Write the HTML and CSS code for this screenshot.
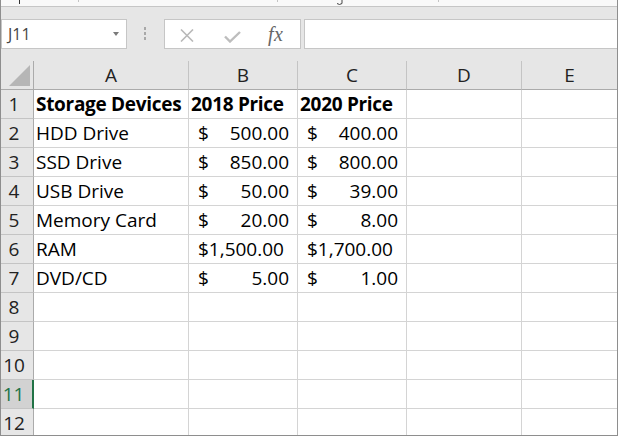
FILE: index.html
```html
<!DOCTYPE html>
<html>
<head>
<meta charset="utf-8">
<link rel="stylesheet" href="styles.css">
</head>
<body>
<div class="window">
  <div class="topstrip">
    <svg width="616" height="6" viewBox="0 0 616 6">
      <rect x="18" y="0" width="1" height="4" fill="#333"/>
      <rect x="77" y="0" width="1" height="2" fill="#c4c4c4"/>
      <rect x="276" y="0" width="1" height="2" fill="#c4c4c4"/>
      <rect x="437" y="0" width="1" height="2" fill="#c4c4c4"/>
      <path d="M336 3.5 Q338.5 5.5 341 3.5 L341 0" fill="none" stroke="#444" stroke-width="1"/>
    </svg>
  </div>
  <div class="toolbar">
    <div class="namebox"><span class="name">J11</span><span class="caret"></span></div>
    <div class="grip"><i></i><i></i><i></i></div>
    <div class="fxbox">
      <svg class="ico-x" width="14" height="13" viewBox="0 0 14 13"><path d="M1 0.5 L13 12.5 M13 0.5 L1 12.5" stroke="#b9b9b9" stroke-width="1.6" fill="none"/></svg>
      <svg class="ico-check" width="17" height="12" viewBox="0 0 17 12"><path d="M1 5.5 L6 10.5 L16 1" stroke="#bdbdbd" stroke-width="2.4" fill="none"/></svg>
      <span class="fx">fx</span>
    </div>
    <div class="formula"></div>
  </div>
  <div class="sheet">
    <div class="corner"><svg width="32" height="28" viewBox="0 0 32 28"><polygon points="29,4 29,25 8,25" fill="#b6b6b6"/></svg></div>
    <div class="ch">A</div><div class="ch">B</div><div class="ch">C</div><div class="ch">D</div><div class="ch last">E</div>

    <div class="rh">1</div><div class="c b">Storage Devices</div><div class="c b">2018 Price</div><div class="c b">2020 Price</div><div class="c"></div><div class="c last"></div>

    <div class="rh">2</div><div class="c">HDD Drive</div><div class="c m"><span>$</span><span>500.00</span></div><div class="c m"><span>$</span><span>400.00</span></div><div class="c"></div><div class="c last"></div>

    <div class="rh">3</div><div class="c">SSD Drive</div><div class="c m"><span>$</span><span>850.00</span></div><div class="c m"><span>$</span><span>800.00</span></div><div class="c"></div><div class="c last"></div>

    <div class="rh">4</div><div class="c">USB Drive</div><div class="c m"><span>$</span><span>50.00</span></div><div class="c m"><span>$</span><span>39.00</span></div><div class="c"></div><div class="c last"></div>

    <div class="rh">5</div><div class="c">Memory Card</div><div class="c m"><span>$</span><span>20.00</span></div><div class="c m"><span>$</span><span>8.00</span></div><div class="c"></div><div class="c last"></div>

    <div class="rh">6</div><div class="c">RAM</div><div class="c m"><span>$1,500.00</span></div><div class="c m"><span>$1,700.00</span></div><div class="c"></div><div class="c last"></div>

    <div class="rh">7</div><div class="c">DVD/CD</div><div class="c m"><span>$</span><span>5.00</span></div><div class="c m"><span>$</span><span>1.00</span></div><div class="c"></div><div class="c last"></div>

    <div class="rh">8</div><div class="c"></div><div class="c"></div><div class="c"></div><div class="c"></div><div class="c last"></div>
    <div class="rh">9</div><div class="c"></div><div class="c"></div><div class="c"></div><div class="c"></div><div class="c last"></div>
    <div class="rh">10</div><div class="c"></div><div class="c"></div><div class="c"></div><div class="c"></div><div class="c last"></div>
    <div class="rh sel">11</div><div class="c"></div><div class="c"></div><div class="c"></div><div class="c"></div><div class="c last"></div>
    <div class="rh">12</div><div class="c"></div><div class="c"></div><div class="c"></div><div class="c"></div><div class="c last"></div>
  </div>
</div>
</body>
</html>
```

FILE: styles.css
```css
html, body {
  margin: 0;
  padding: 0;
  background: #ffffff;
}
body {
  width: 619px;
  height: 436px;
  overflow: hidden;
  font-family: "Open Sans", "Noto Sans", sans-serif;
}
.window {
  width: 618px;
  height: 436px;
  box-sizing: border-box;
  border-left: 1px solid #8e8e8e;
  border-right: 1px solid #8e8e8e;
  border-bottom: 1px solid #8e8e8e;
  overflow: hidden;
  background: #ffffff;
}
.topstrip {
  height: 6px;
  background: #f9f9f9;
  border-bottom: 1px solid #c6c6c6;
}
.topstrip svg {
  display: block;
}
.toolbar {
  height: 54px;
  box-sizing: border-box;
  padding-top: 12px;
  background: #e6e6e6;
  display: flex;
  align-items: flex-start;
}
.namebox {
  width: 126px;
  height: 30px;
  box-sizing: border-box;
  border: 1px solid #c6c6c6;
  background: #ffffff;
  display: flex;
  align-items: center;
  justify-content: space-between;
  padding: 0 7px 0 6px;
}
.name {
  font-size: 16px;
  line-height: 28px;
  color: #444444;
}
.caret {
  width: 0;
  height: 0;
  border-left: 3.5px solid transparent;
  border-right: 3.5px solid transparent;
  border-top: 4px solid #7a7a7a;
}
.grip {
  width: 37px;
  box-sizing: border-box;
  padding-left: 17px;
  margin-top: 8px;
  display: flex;
  flex-direction: column;
  gap: 2px;
}
.grip i {
  display: block;
  width: 2px;
  height: 3px;
  background: #a8a8a8;
}
.fxbox {
  width: 137px;
  height: 30px;
  box-sizing: border-box;
  border: 1px solid #c6c6c6;
  background: #ffffff;
  display: flex;
  align-items: center;
  padding-left: 15px;
}
.ico-x {
  display: block;
  margin-right: 30px;
  margin-top: 2px;
}
.ico-check {
  display: block;
  margin-right: 27px;
  margin-top: 5px;
}
.fx {
  font-family: "Liberation Serif", serif;
  font-style: italic;
  font-size: 20px;
  letter-spacing: 0.5px;
  color: #666666;
  line-height: 28px;
}
.formula {
  flex: 1;
  height: 30px;
  box-sizing: border-box;
  margin-left: 3px;
  border: 1px solid #c6c6c6;
  border-right: none;
  background: #ffffff;
}
.sheet {
  display: grid;
  grid-template-columns: 33px 155px 109px 109px 115px 95px;
  grid-auto-rows: 29px;
}
.sheet > div {
  box-sizing: border-box;
  border-right: 1px solid #d4d4d4;
  border-bottom: 1px solid #d4d4d4;
  font-size: 19px;
  line-height: 28px;
  white-space: nowrap;
  overflow: hidden;
}
.sheet > div.last {
  border-right: none;
}
.corner {
  background: #e6e6e6;
  border-right-color: #ababab !important;
  border-bottom-color: #ababab !important;
}
.corner svg {
  display: block;
}
.ch {
  background: #e6e6e6;
  text-align: center;
  color: #222222;
  border-right-color: #c4c4c4 !important;
  border-bottom-color: #ababab !important;
}
.rh {
  background: #e6e6e6;
  text-align: center;
  padding-right: 6px;
  color: #222222;
  border-right-color: #ababab !important;
  border-bottom-color: #c4c4c4 !important;
}
.rh.sel {
  background: #d2d2d2;
  color: #217346;
  border-right: 2px solid #217346 !important;
}
.c {
  padding-left: 2px;
  color: #000000;
}
.c.b {
  font-weight: 700;
  letter-spacing: -0.3px;
}
.c.m {
  display: flex;
  justify-content: space-between;
  padding: 0 8px 0 9px;
}
```
